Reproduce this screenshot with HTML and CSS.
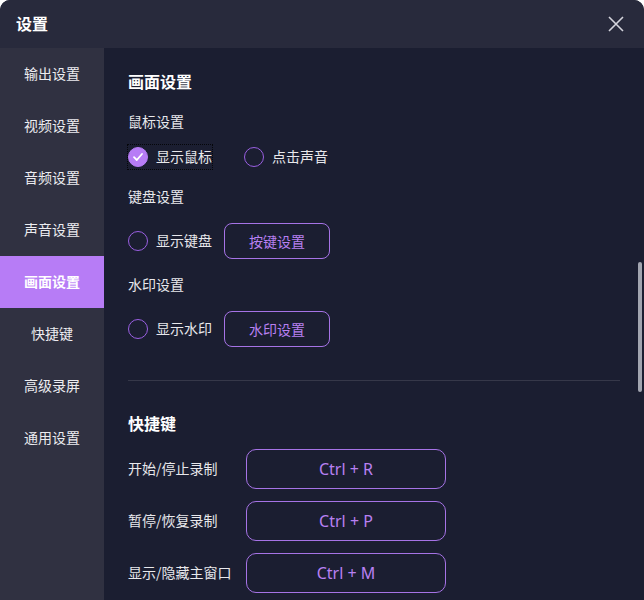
FILE: index.html
```html
<!DOCTYPE html>
<html lang="zh-CN">
  <head>
    <meta charset="UTF-8" />
    <title>设置</title>
    <link rel="stylesheet" href="styles.css">
  </head>
  <body>
    <div class="window">
      <div class="title-bar">
        <span class="title">设置</span>
        <button class="close-button">
          <svg width="16" height="16" viewBox="0 0 16 16">
            <path d="M1 1L15 15M15 1L1 15" stroke="#d4d4dc" stroke-width="1.6" fill="none" />
          </svg>
        </button>
      </div>

      <div class="main">
        <div class="sidebar">
          <div class="nav-item">输出设置</div>
          <div class="nav-item">视频设置</div>
          <div class="nav-item">音频设置</div>
          <div class="nav-item">声音设置</div>
          <div class="nav-item active">画面设置</div>
          <div class="nav-item">快捷键</div>
          <div class="nav-item">高级录屏</div>
          <div class="nav-item">通用设置</div>
        </div>

        <div class="content">
          <h2 class="section-title">画面设置</h2>

          <div class="group-label first">鼠标设置</div>
          <div class="row row-small">
            <label class="radio focused">
              <span class="dot checked">
                <svg width="12" height="12" viewBox="0 0 12 12">
                  <path d="M2 6.2L4.8 9L10 3" stroke="#fff" stroke-width="1.8" fill="none" stroke-linecap="round" stroke-linejoin="round" />
                </svg>
              </span>
              <span class="radio-text">显示鼠标</span>
            </label>
            <label class="radio">
              <span class="dot"></span>
              <span class="radio-text">点击声音</span>
            </label>
          </div>

          <div class="group-label">键盘设置</div>
          <div class="row">
            <label class="radio">
              <span class="dot"></span>
              <span class="radio-text">显示键盘</span>
            </label>
            <button class="outline-button">按键设置</button>
          </div>

          <div class="group-label tight">水印设置</div>
          <div class="row">
            <label class="radio">
              <span class="dot"></span>
              <span class="radio-text">显示水印</span>
            </label>
            <button class="outline-button">水印设置</button>
          </div>

          <div class="divider"></div>

          <h2 class="section-title">快捷键</h2>

          <div class="shortcuts">
            <div class="shortcut">
              <span class="shortcut-name">开始/停止录制</span>
              <button class="key-button">Ctrl + R</button>
            </div>
            <div class="shortcut">
              <span class="shortcut-name">暂停/恢复录制</span>
              <button class="key-button">Ctrl + P</button>
            </div>
            <div class="shortcut">
              <span class="shortcut-name">显示/隐藏主窗口</span>
              <button class="key-button">Ctrl + M</button>
            </div>
          </div>

          <div class="scrollbar"></div>
        </div>
      </div>
    </div>
  </body>
</html>
```

FILE: styles.css
```css
body {
  margin: 0;
  background-color: #fff;
  font-family: "Noto Sans CJK SC", "Noto Sans", sans-serif;
  overflow: hidden;
}
.window {
  width: 644px;
  height: 600px;
  border-radius: 10px 10px 0 0;
  overflow: hidden;
  display: flex;
  flex-direction: column;
  background-color: #1b1e31;
}
.title-bar {
  height: 48px;
  flex-shrink: 0;
  box-sizing: border-box;
  background-color: #282a3c;
  display: flex;
  align-items: center;
  justify-content: space-between;
  padding: 0 20px 2px 16px;
}
.title {
  color: #fff;
  font-size: 16px;
  font-weight: bold;
}
.close-button {
  background: transparent;
  border: none;
  padding: 0;
  width: 16px;
  height: 16px;
  margin-top: 2px;
  display: flex;
  cursor: pointer;
}
.main {
  flex: 1;
  display: flex;
  min-height: 0;
}
.sidebar {
  width: 104px;
  flex-shrink: 0;
  background-color: #303141;
}
.nav-item {
  height: 52px;
  box-sizing: border-box;
  padding-bottom: 2px;
  display: flex;
  align-items: center;
  justify-content: center;
  color: #ececf0;
  font-size: 14px;
}
.nav-item.active {
  background-color: #b77cf6;
  color: #fff;
  font-weight: bold;
}
.content {
  flex: 1;
  position: relative;
  padding: 23px 24px 0 24px;
  color: #e8e8ec;
  font-size: 14px;
}
.section-title {
  margin: 0;
  font-size: 16px;
  line-height: 20px;
  font-weight: bold;
  color: #fff;
}
.group-label {
  line-height: 20px;
  margin-top: 17px;
  margin-bottom: 17px;
}
.group-label.first {
  margin-top: 20px;
  margin-bottom: 14px;
}
.group-label.tight {
  margin-top: 15px;
}
.row {
  display: flex;
  align-items: center;
  height: 36px;
}
.row-small {
  height: 24px;
  gap: 32px;
}
.radio {
  display: flex;
  align-items: center;
  gap: 8px;
  height: 24px;
  line-height: 20px;
  color: #e8e8ec;
}
.radio-text {
  margin-top: -2px;
}
.radio.focused {
  outline: 1px dotted #05060a;
  outline-offset: 0;
}
.dot {
  width: 20px;
  height: 20px;
  box-sizing: border-box;
  border: 1.5px solid #9a5fe2;
  border-radius: 50%;
  display: flex;
  align-items: center;
  justify-content: center;
}
.dot.checked {
  background-color: #b77cf6;
  border-color: #b77cf6;
}
.outline-button {
  margin-left: 12px;
  width: 106px;
  height: 36px;
  padding-bottom: 2px;
  background-color: transparent;
  border: 1px solid #a673e6;
  border-radius: 8px;
  color: #b880f2;
  font-family: inherit;
  font-size: 14px;
  cursor: pointer;
}
.divider {
  height: 1px;
  background-color: #363849;
  margin: 33px 0 32px 0;
}
.shortcuts {
  margin-top: 16px;
  display: flex;
  flex-direction: column;
  gap: 12px;
}
.shortcut {
  display: flex;
  align-items: center;
}
.shortcut-name {
  width: 118px;
  flex-shrink: 0;
  margin-top: -2px;
  color: #e8e8ec;
  white-space: nowrap;
}
.key-button {
  width: 200px;
  height: 40px;
  background-color: transparent;
  border: 1px solid #a673e6;
  border-radius: 10px;
  color: #b880f2;
  font-family: "Noto Sans", sans-serif;
  font-size: 16px;
  cursor: pointer;
}
.scrollbar {
  position: absolute;
  right: 2px;
  top: 214px;
  width: 4px;
  height: 130px;
  border-radius: 2px;
  background-color: #a2a5b0;
}
```
